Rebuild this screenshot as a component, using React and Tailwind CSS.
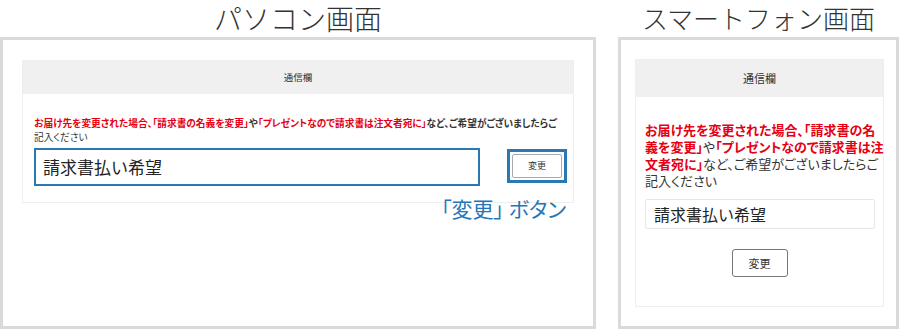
import React from "react";

// Annotated comparison of the "通信欄" (message field) on PC and smartphone

const RED_1 = "お届け先を変更された場合、";
const RED_2 = "「請求書の名義を変更」";
const RED_3 = "「プレゼントなので請求書は注文者宛に」";

function CardHeader({ className }) {
  return (
    <div className={`bg-[#f0f0f0] flex items-center justify-center text-[#333] ${className}`}>
      通信欄
    </div>
  );
}

function PcPanel() {
  return (
    <section className="w-[596px] flex flex-col">
      <h2 className="h-[37px] text-center text-[28px] leading-[36px] font-light text-[#333]">
        パソコン画面
      </h2>
      <div className="relative h-[292px] border-[3px] border-[#dadada] pl-[19px] pt-[20px]">
        <div className="w-[552px] border border-[#eeeeee] bg-white">
          <CardHeader className="h-[33px] text-[9.5px]" />
          <div className="pl-[11px] pr-[6px] pt-[22px] pb-[16px]">
            <p className="text-[9.7px] leading-[14px] font-bold text-[#333] whitespace-nowrap [font-feature-settings:'palt']">
              <span className="text-[#e60012]">{RED_1}{RED_2}</span>や
              <span className="text-[#e60012]">{RED_3}</span>など、ご希望がございましたらご
              <br />
              <span className="font-normal">記入ください</span>
            </p>
            <div className="flex items-start mt-[4px]">
              <div className="w-[446px] h-[38px] border-2 border-[#2b79b3] pl-[7px] flex items-center text-[17px] text-[#222]">
                請求書払い希望
              </div>
              <div className="ml-auto mt-[1px] w-[60px] h-[34px] border-[3px] border-[#2b79b3] p-[2px]">
                <div className="h-full border border-[#aaa] rounded-[2px] flex items-center justify-center text-[9px] text-[#333]">
                  変更
                </div>
              </div>
            </div>
          </div>
        </div>
        {/* annotation label */}
        <div className="absolute left-[438px] top-[154px] text-[21px] leading-[28px] text-[#2576b8] whitespace-nowrap [font-feature-settings:'palt']">
          「変更」 ボタン
        </div>
      </div>
    </section>
  );
}

function SpPanel() {
  return (
    <section className="w-[281px] flex flex-col">
      <h2 className="h-[37px] text-center text-[26px] leading-[36px] font-light text-[#333] whitespace-nowrap">
        スマートフォン画面
      </h2>
      <div className="h-[292px] border-[3px] border-[#dadada] pl-[14px] pt-[19px]">
        <div className="w-[249px] border border-[#eeeeee] bg-white">
          <CardHeader className="h-[37px] text-[11px]" />
          <div className="px-[9px] pt-[24px] pb-[29px]">
            <p className="text-[13px] leading-[17px] text-[#333] whitespace-nowrap [font-feature-settings:'palt']">
              <span className="text-[#e60012] font-bold">お届け先を変更された場合、「請求書の名</span>
              <br />
              <span className="text-[#e60012] font-bold">義を変更」</span>や
              <span className="text-[#e60012] font-bold">「プレゼントなので請求書は注</span>
              <br />
              <span className="text-[#e60012] font-bold">文者宛に」</span>など、ご希望がございましたらご
              <br />
              記入ください
            </p>
            <div className="mt-[10px] w-[230px] h-[30px] border border-[#e6e6e6] rounded-[2px] pl-[8px] flex items-center text-[16px] text-[#222]">
              請求書払い希望
            </div>
            <div className="mt-[20px] flex justify-center">
              <div className="w-[56px] h-[28px] border border-[#777] rounded-[3px] flex items-center justify-center text-[11px] text-[#333]">
                変更
              </div>
            </div>
          </div>
        </div>
      </div>
    </section>
  );
}

export default function App() {
  return (
    <div className="w-[900px] h-[331px] bg-white flex gap-[22px] font-['Noto_Sans_CJK_JP','Noto_Sans',sans-serif]">
      <PcPanel />
      <SpPanel />
    </div>
  );
}
